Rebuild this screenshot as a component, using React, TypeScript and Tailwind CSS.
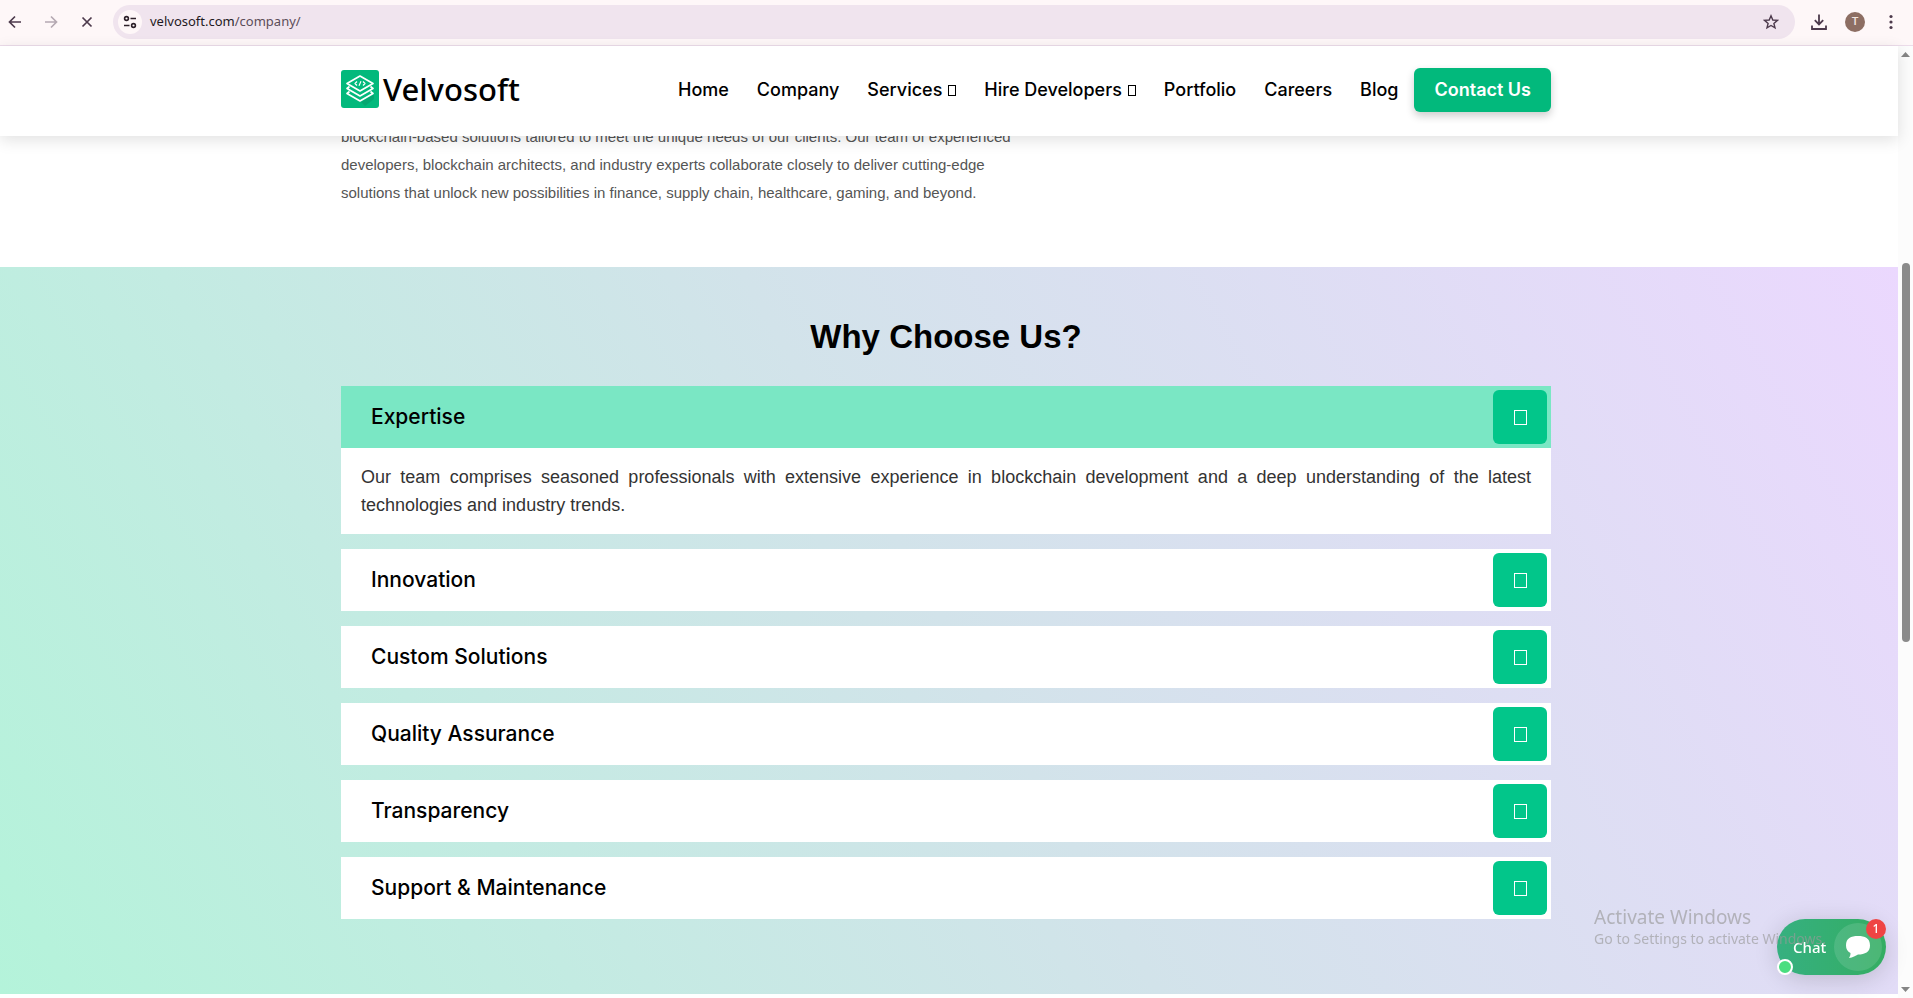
import { useState } from 'react';
import clsx from 'clsx';

const navLinks = [
  { name: 'Home', href: '#home' },
  { name: 'Company', href: '#company' },
  { name: 'Services', href: '#services', hasMenu: true },
  { name: 'Hire Developers', href: '#hire', hasMenu: true },
  { name: 'Portfolio', href: '#portfolio' },
  { name: 'Careers', href: '#careers' },
  { name: 'Blog', href: '#blog' },
];

const reasons = [
  {
    title: 'Expertise',
    text: 'Our team comprises seasoned professionals with extensive experience in blockchain development and a deep understanding of the latest technologies and industry trends.',
  },
  { title: 'Innovation' },
  { title: 'Custom Solutions' },
  { title: 'Quality Assurance' },
  { title: 'Transparency' },
  { title: 'Support & Maintenance' },
];

function BrowserBar() {
  return (
    <div className="flex h-[46px] shrink-0 items-center border-b border-[#ecdcea] bg-[#fef7f8] pb-px text-[#4d3a4c]">
      <button aria-label="Back" className="ml-[7px] flex h-4 w-4 items-center justify-center">
        <svg width="14" height="14" viewBox="0 0 14 14" fill="none" stroke="currentColor" strokeWidth="1.7">
          <path d="M13 7H2M7 1.5L1.5 7L7 12.5" />
        </svg>
      </button>
      <button aria-label="Forward" className="ml-5 flex h-4 w-4 items-center justify-center text-[#b5a9b2]">
        <svg width="14" height="14" viewBox="0 0 14 14" fill="none" stroke="currentColor" strokeWidth="1.7">
          <path d="M1 7H12M7 1.5L12.5 7L7 12.5" />
        </svg>
      </button>
      <button aria-label="Stop" className="ml-5 flex h-4 w-4 items-center justify-center">
        <svg width="12" height="12" viewBox="0 0 12 12" fill="none" stroke="currentColor" strokeWidth="1.7">
          <path d="M1.5 1.5L10.5 10.5M10.5 1.5L1.5 10.5" />
        </svg>
      </button>
      <div className="ml-[18px] flex h-[34px] grow items-center rounded-full bg-[#f0e4ee] pl-[5px] pr-4">
        <button aria-label="Site information" className="flex h-6 w-6 items-center justify-center rounded-full bg-[#fef7f8] text-[#2d2029]">
          <svg width="14" height="14" viewBox="0 0 14 14" fill="none" stroke="currentColor" strokeWidth="1.6">
            <circle cx="3.5" cy="3.5" r="1.9" />
            <path d="M7.5 3.5H13M1 10.5H6.5" />
            <circle cx="10.5" cy="10.5" r="1.9" />
          </svg>
        </button>
        <div className="ml-2 grow font-['Noto_Sans','Liberation_Sans',sans-serif] text-[13px] text-[#1f1a1e]">
          velvosoft.com<span className="text-[#5c4d59]">/company/</span>
        </div>
        <button aria-label="Bookmark">
          <svg width="16" height="16" viewBox="0 0 16 16" fill="none" stroke="currentColor" strokeWidth="1.4">
            <path d="M8 1.8L9.8 6L14.4 6.4L10.9 9.4L12 13.9L8 11.5L4 13.9L5.1 9.4L1.6 6.4L6.2 6Z" />
          </svg>
        </button>
      </div>
      <button aria-label="Downloads" className="ml-4">
        <svg width="16" height="16" viewBox="0 0 16 16" fill="none" stroke="currentColor" strokeWidth="1.8">
          <path d="M8 0.5V10M3.8 6.2L8 10.4L12.2 6.2M1 11.5V15H15V11.5" />
        </svg>
      </button>
      <button aria-label="Profile" className="ml-[18px] flex h-5 w-5 items-center justify-center rounded-full bg-[#8d6e63] font-['Roboto',sans-serif] text-[11px] font-medium text-[#f3e6e0]">
        T
      </button>
      <button aria-label="Menu" className="ml-[18px] mr-3.5">
        <svg width="16" height="16" viewBox="0 0 16 16" fill="currentColor">
          <circle cx="8" cy="2.5" r="1.6" />
          <circle cx="8" cy="8" r="1.6" />
          <circle cx="8" cy="13.5" r="1.6" />
        </svg>
      </button>
    </div>
  );
}

function Logo() {
  return (
    <a href="#home" className="flex items-center gap-1 pb-1 text-black">
      <svg width="38" height="38" viewBox="0 0 38 38">
        <rect width="38" height="38" rx="3" fill="#02b97c" />
        <path d="M20 32L33 24.500V29L24 36Z" fill="#05a771" />
        <g fill="none" stroke="#fff" strokeWidth="1.7" strokeLinejoin="round">
          <path d="M19 6L32 13.5L19 21L6 13.5Z" />
          <path d="M8.5 16.5L6 18.5L19 26L32 18.5L29.5 16.5" />
          <path d="M8.5 21.5L6 23.5L19 31L32 23.5L29.5 21.5" />
          <path d="M16 11.5L14 13.5L16 15.5M22 11.5L24 13.5L22 15.5M20 11.3L18 15.7" strokeWidth="1.2" />
        </g>
      </svg>
      <span className="font-['Noto_Sans',sans-serif] text-[31px] font-medium leading-10">Velvosoft</span>
    </a>
  );
}

function Header() {
  return (
    <header className="relative z-10 h-[90px] shrink-0 bg-white pr-1.5 shadow-[0_4px_15px_rgba(0,0,0,0.12)]">
      <div className="mx-auto flex h-full max-w-[1210px] items-center justify-between">
        <Logo />
        <nav className="flex items-center pb-0.5 font-['Inter',sans-serif] text-lg font-medium text-black">
          {navLinks.map((link) => (
            <a key={link.name} href={link.href} className="mr-7 flex items-center gap-1.5 whitespace-nowrap last-of-type:mr-4">
              {link.name}
              {link.hasMenu && <span className="h-[11px] w-2 border border-black" />}
            </a>
          ))}
          <button className="h-11 rounded-md bg-[#02b97c] px-5 font-semibold text-white shadow-[0_4px_8px_rgba(0,0,0,0.2)]">
            Contact Us
          </button>
        </nav>
      </div>
    </header>
  );
}

function Accordion() {
  const [open, setOpen] = useState(0);

  return (
    <div className="flex flex-col gap-[15px]">
      {reasons.map((item, i) => (
        <div key={item.title} className="bg-white">
          <button
            onClick={() => setOpen(open === i ? -1 : i)}
            aria-expanded={open === i}
            className={clsx(
              'flex h-[62px] w-full items-center justify-between pl-[30px] pr-1 text-left',
              open === i ? 'bg-[#7ae7c4]' : 'bg-white'
            )}
          >
            <span className="font-['Inter',sans-serif] text-[21px] font-medium text-black">{item.title}</span>
            <span className="flex h-[54px] w-[54px] items-center justify-center rounded-md bg-[#02c68a]">
              <span className="h-[15px] w-[13px] border border-white" />
            </span>
          </button>
          {open === i && item.text && (
            <p className="px-5 py-[15px] text-justify text-lg leading-7 text-[#333]">{item.text}</p>
          )}
        </div>
      ))}
    </div>
  );
}

function ScrollBar() {
  return (
    <div className="flex w-[15px] shrink-0 flex-col items-center justify-between bg-[#fcfcfc] py-1">
      <svg width="9" height="9" viewBox="0 0 9 9" fill="#858585">
        <path d="M0 7L4.5 2L9 7Z" />
      </svg>
      <div className="flex w-full grow flex-col items-center">
        <div className="h-[22%] shrink-0" />
        <div className="h-[41%] w-2 rounded-full bg-[#8b8b8b]" />
      </div>
      <svg width="9" height="9" viewBox="0 0 9 9" fill="#858585">
        <path d="M0 2L4.5 7L9 2Z" />
      </svg>
    </div>
  );
}

function ChatWidget() {
  return (
    <button className="fixed bottom-[23px] right-[27px] flex h-14 w-[109px] items-center justify-between rounded-full bg-linear-to-r from-[#36b080] to-[#34ad62] pl-4 pr-1 font-['Noto_Sans',sans-serif] text-[15px] font-medium text-white shadow-[0_4px_24px_rgba(0,0,0,0.16)]">
      Chat
      <span className="flex h-12 w-12 items-center justify-center rounded-full bg-white/12">
        <svg width="26" height="24" viewBox="0 0 26 24" fill="#fff">
          <path d="M13 1C20 1 25 3 25 10.5C25 17 20 19.5 13 19.5C10.5 20.5 8 22.5 4 23C5 21.5 5.5 20 5.500 18C2.5 16.5 1 14 1 10.5C1 3 6 1 13 1Z" />
        </svg>
      </span>
      <span className="absolute right-0 top-0 flex h-5 w-5 items-center justify-center rounded-full bg-[#ef4444] text-xs">1</span>
      <span className="absolute bottom-0 left-0 h-4 w-4 rounded-full border-2 border-white bg-[#4ade80]" />
    </button>
  );
}

export default function App() {
  return (
    <div className="flex h-screen flex-col overflow-hidden bg-white font-['Liberation_Sans',Arial,sans-serif]">
      <BrowserBar />
      <div className="flex min-h-0 grow">
        <div className="flex min-w-0 grow flex-col">
          <Header />
          <main className="flex grow flex-col">
            <div className="h-[131px] shrink-0 overflow-hidden pr-1.5">
              <div className="mx-auto flex h-[71px] max-w-[1210px] flex-col justify-end">
                <p className="max-w-[690px] text-[15px] leading-7 text-[#555]">
                  blockchain-based solutions tailored to meet the unique needs of our clients. Our team of experienced
                  developers, blockchain architects, and industry experts collaborate closely to deliver cutting-edge
                  solutions that unlock new possibilities in finance, supply chain, healthcare, gaming, and beyond.
                </p>
              </div>
            </div>
            <section className="mb-1 grow bg-[linear-gradient(60deg,#b4f3da,#d2e3ea_50%,#ebd8fe)] pr-1.5 pt-[50px]">
              <div className="mx-auto max-w-[1210px]">
                <h2 className="mb-[29px] text-center text-[33px] font-bold leading-10 text-black">Why Choose Us?</h2>
                <Accordion />
              </div>
            </section>
          </main>
        </div>
        <ScrollBar />
      </div>
      <ChatWidget />
      {/* Windows activation watermark */}
      <div className="pointer-events-none fixed bottom-[49px] right-[87px] font-['Noto_Sans',sans-serif] text-[#999]/65">
        <div className="text-[19px] leading-6">Activate Windows</div>
        <div className="text-sm leading-5">Go to Settings to activate Windows.</div>
      </div>
    </div>
  );
}
